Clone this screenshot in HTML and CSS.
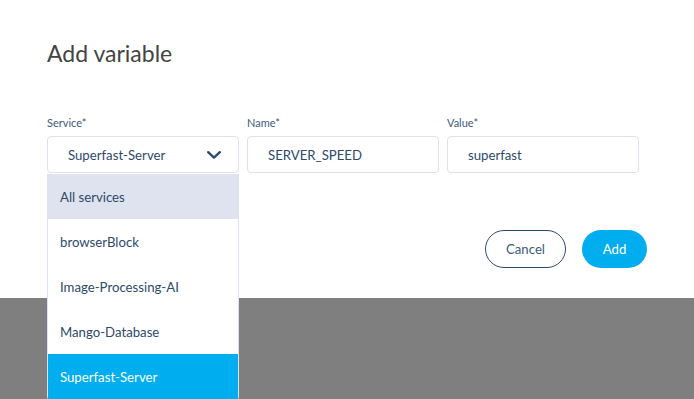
FILE: index.html
```html
<!DOCTYPE html>
<html lang="en">
<head>
  <meta charset="UTF-8">
  <title>Add variable</title>
  <link rel="stylesheet" href="styles.css">
</head>
<body>
  <div class="modal">
    <h1>Add variable</h1>

    <div class="fields">
      <div class="field">
        <label>Service*</label>
        <div class="select">
          <span>Superfast-Server</span>
          <svg class="chevron" width="14" height="8" viewBox="0 0 14 8">
            <path d="M1.2 1.2 L7 6.6 L12.8 1.2" fill="none" stroke="#2d4a69" stroke-width="2.4" stroke-linecap="round" stroke-linejoin="round"/>
          </svg>
          <ul class="options">
            <li class="muted">All services</li>
            <li>browserBlock</li>
            <li>Image-Processing-AI</li>
            <li>Mango-Database</li>
            <li class="selected">Superfast-Server</li>
          </ul>
        </div>
      </div>
      <div class="field">
        <label>Name*</label>
        <div class="input">SERVER_SPEED</div>
      </div>
      <div class="field">
        <label>Value*</label>
        <div class="input">superfast</div>
      </div>
    </div>

    <div class="actions">
      <button class="btn btn-outline">Cancel</button>
      <button class="btn btn-primary">Add</button>
    </div>
  </div>
  <div class="backdrop"></div>
</body>
</html>
```

FILE: styles.css
```css
body {
  margin: 0;
  height: 100vh;
  display: flex;
  flex-direction: column;
  font-family: Lato, "Open Sans", sans-serif;
  color: #2d4a69;
}
.modal {
  position: relative;
  z-index: 2;
  background: #fff;
  height: 298px;
  flex: none;
  padding: 39px 47px 0;
  box-sizing: border-box;
}
.backdrop {
  flex: 1;
  background: #7f7f80;
}
h1 {
  margin: 0;
  font-size: 23px;
  line-height: 29px;
  font-weight: 400;
  color: #444;
}
.fields {
  display: grid;
  grid-template-columns: repeat(3, 192px);
  gap: 8px;
  margin-top: 48px;
}
.field label {
  display: block;
  font-size: 11px;
  line-height: 14px;
  color: #3e5b7a;
  margin-bottom: 6px;
}
.input, .select {
  height: 37px;
  box-sizing: border-box;
  border: 1px solid #dde0ef;
  border-radius: 4px;
  padding: 0 20px;
  font-size: 13.2px;
  display: flex;
  align-items: center;
}
.select {
  position: relative;
  justify-content: space-between;
  padding-right: 17px;
}
.options {
  position: absolute;
  z-index: 3;
  top: 37px;
  left: -1px;
  right: -1px;
  margin: 0;
  padding: 0;
  list-style: none;
  background: #fff;
  border: 1px solid #dde0ef;
  border-top: none;
  border-radius: 0 0 4px 4px;
}
.options li {
  height: 45px;
  line-height: 46px;
  padding-left: 12px;
  font-size: 13.2px;
}
.options .muted {
  background: #dfe2ef;
}
.options .selected {
  background: #00aeef;
  color: #fff;
}
.actions {
  display: flex;
  justify-content: flex-end;
  gap: 16px;
  margin-top: 57px;
}
.btn {
  height: 38px;
  border-radius: 19px;
  font-family: inherit;
  font-size: 13.2px;
  padding: 0;
  cursor: pointer;
}
.btn-outline {
  width: 81px;
  background: #fff;
  border: 1px solid #2d4a69;
  color: #3e5b7a;
}
.btn-primary {
  width: 65px;
  background: #00aeef;
  border: none;
  color: #fff;
}
```
